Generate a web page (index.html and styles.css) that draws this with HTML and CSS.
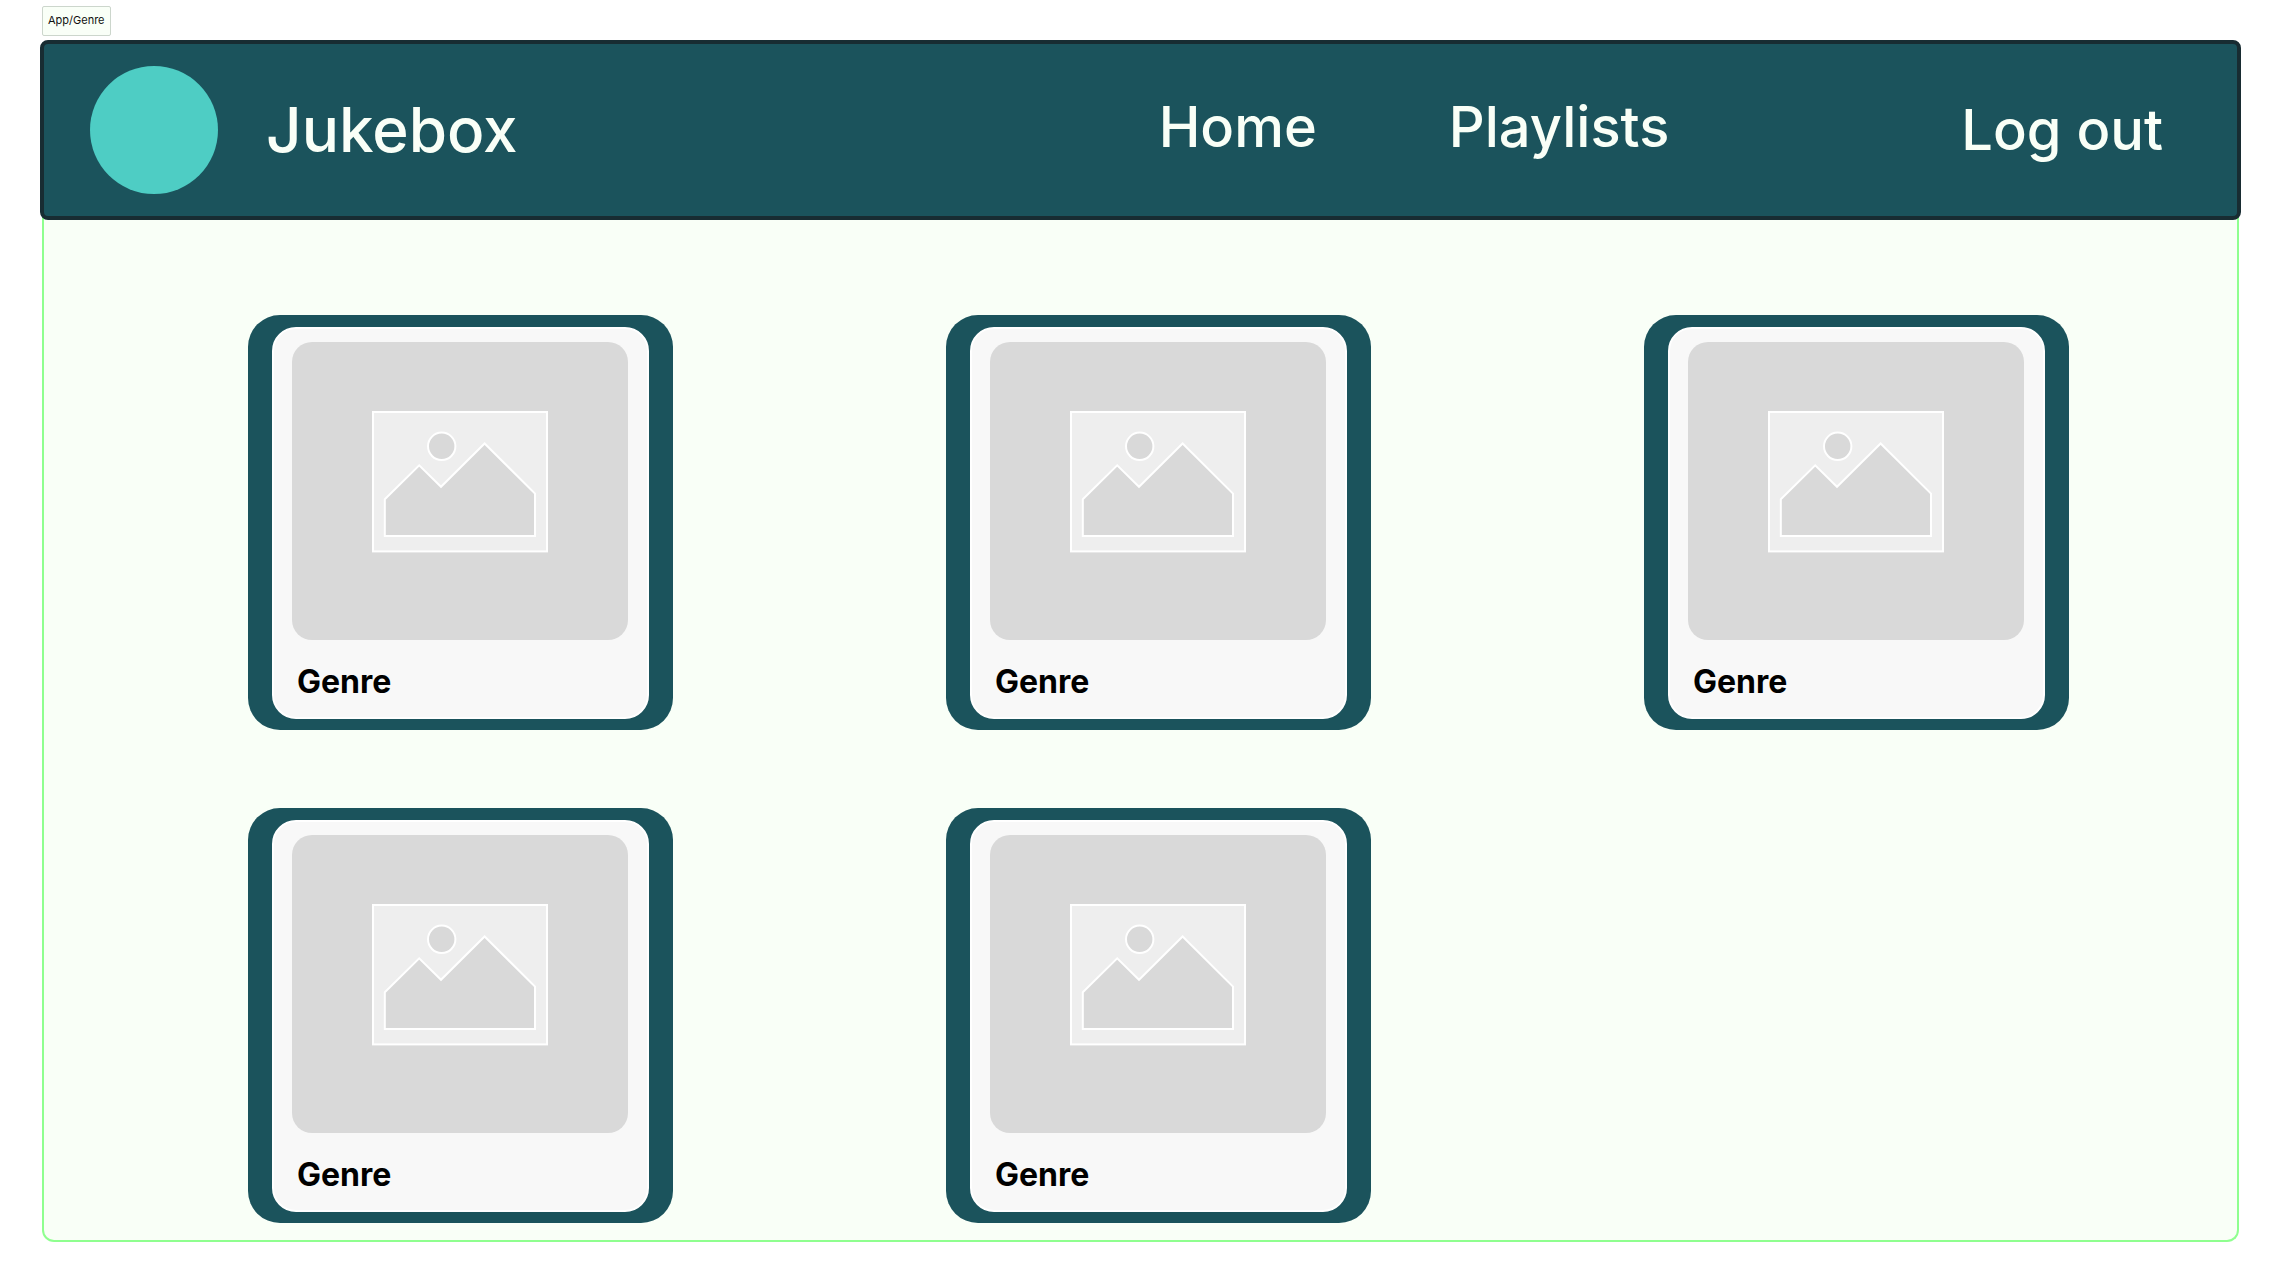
FILE: index.html
```html
<!DOCTYPE html>
<html lang="en">
<head>
<meta charset="utf-8">
<meta name="viewport" content="width=device-width, initial-scale=1">
<title>Jukebox – Genre</title>
<link rel="stylesheet" href="styles.css">
</head>
<body>
<svg class="symbols" aria-hidden="true">
  <symbol id="picture" viewBox="0 0 176 142">
    <rect x="1" y="1" width="174" height="139.4" fill="#eeeeee"/>
    <circle cx="69.7" cy="35.3" r="13.7" fill="#d9d9d9"/>
    <path d="M12.8 88.3 47.2 54.4 69 75.8 112.6 32.5 163 82.6V125H12.8Z" fill="#d9d9d9"/>
  </symbol>
</svg>
<div class="tag">App/Genre</div>
<div class="frame">
  <header class="topbar">
    <div class="brand">
      <span class="logo"></span>
      <span class="brand-name">Jukebox</span>
    </div>
    <nav class="nav">
      <a class="link" href="#home">Home</a>
      <a class="link" href="#playlists">Playlists</a>
    </nav>
    <button class="link logout" type="button">Log out</button>
  </header>
  <main class="genres">
    <article class="card">
      <div class="card-body">
        <div class="cover"><svg class="picture"><use href="#picture"/></svg></div>
        <h2 class="card-title">Genre</h2>
      </div>
    </article>
    <article class="card">
      <div class="card-body">
        <div class="cover"><svg class="picture"><use href="#picture"/></svg></div>
        <h2 class="card-title">Genre</h2>
      </div>
    </article>
    <article class="card">
      <div class="card-body">
        <div class="cover"><svg class="picture"><use href="#picture"/></svg></div>
        <h2 class="card-title">Genre</h2>
      </div>
    </article>
    <article class="card">
      <div class="card-body">
        <div class="cover"><svg class="picture"><use href="#picture"/></svg></div>
        <h2 class="card-title">Genre</h2>
      </div>
    </article>
    <article class="card">
      <div class="card-body">
        <div class="cover"><svg class="picture"><use href="#picture"/></svg></div>
        <h2 class="card-title">Genre</h2>
      </div>
    </article>
  </main>
</div>
</body>
</html>
```
FILE: styles.css
```css
* {
  box-sizing: border-box;
}

body {
  margin: 0;
  padding: 6px 42px 40px;
  background: #ffffff;
  font-family: Inter, "Liberation Sans", sans-serif;
}

.symbols {
  display: none;
}

.tag {
  width: fit-content;
  margin-bottom: 4px;
  padding: 6px 5px 8px;
  border: 1px solid #ccd6cc;
  border-radius: 2px;
  background: #f9fff7;
  color: #111111;
  font-size: 11px;
  line-height: 14px;
}

.frame {
  border: 2px solid #8fff8f;
  border-top: 0;
  border-radius: 12px;
  background: #f9fff7;
}

.topbar {
  display: flex;
  align-items: center;
  margin: 0 -4px;
  padding: 22px 74px 22px 46px;
  border: 4px solid #182c32;
  border-radius: 8px;
  background: #1b535c;
  color: #f9fff7;
}

.brand {
  display: flex;
  align-items: center;
  gap: 48px;
}

.logo {
  width: 128px;
  height: 128px;
  border-radius: 50%;
  background: #4ecdc4;
}

.brand-name {
  font-size: 62px;
  font-weight: 500;
  line-height: 80px;
}

.nav {
  display: flex;
  gap: 132px;
  margin-left: auto;
  padding-bottom: 6px;
}

.link {
  padding: 0;
  border: 0;
  background: none;
  color: inherit;
  font-family: inherit;
  font-size: 56px;
  font-weight: 500;
  line-height: 72px;
  text-decoration: none;
}

.logout {
  margin-left: 292px;
}

.genres {
  display: grid;
  grid-template-columns: repeat(3, 425px);
  justify-content: space-between;
  row-gap: 78px;
  padding: 95px 168px 17px 204px;
}

.card {
  padding: 12px 24px 11px;
  border-radius: 32px;
  background: #1b535c;
}

.card-body {
  padding: 13px 19px 19px 18px;
  border: 2px solid #ffffff;
  border-radius: 24px;
  background: #f8f8f8;
}

.cover {
  display: flex;
  justify-content: center;
  height: 298px;
  padding-top: 69px;
  border-radius: 20px;
  background: #d9d9d9;
}

.picture {
  width: 176px;
  height: 142px;
  stroke: #ffffff;
  stroke-width: 2;
}

.card-title {
  margin: 0;
  padding: 25px 5px 0;
  color: #000000;
  font-size: 32px;
  font-weight: 700;
  line-height: 33px;
}
```
